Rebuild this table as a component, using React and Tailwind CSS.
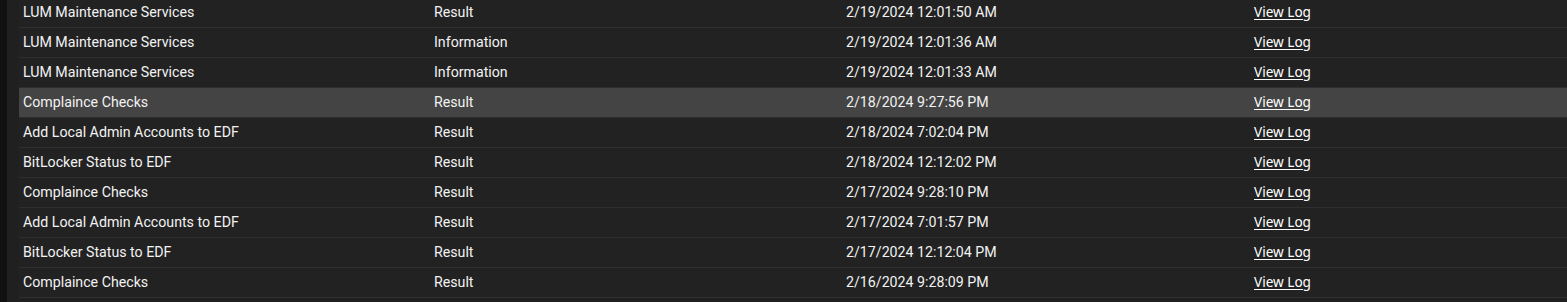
import React from "react";

const rows = [
  ["LUM Maintenance Services", "Result", "2/19/2024 12:01:50 AM"],
  ["LUM Maintenance Services", "Information", "2/19/2024 12:01:36 AM"],
  ["LUM Maintenance Services", "Information", "2/19/2024 12:01:33 AM"],
  ["Complaince Checks", "Result", "2/18/2024 9:27:56 PM", true],
  ["Add Local Admin Accounts to EDF", "Result", "2/18/2024 7:02:04 PM"],
  ["BitLocker Status to EDF", "Result", "2/18/2024 12:12:02 PM"],
  ["Complaince Checks", "Result", "2/17/2024 9:28:10 PM"],
  ["Add Local Admin Accounts to EDF", "Result", "2/17/2024 7:01:57 PM"],
  ["BitLocker Status to EDF", "Result", "2/17/2024 12:12:04 PM"],
  ["Complaince Checks", "Result", "2/16/2024 9:28:09 PM"],
];

export default function App() {
  return (
    <div className="flex w-[1567px] h-[302px] overflow-hidden bg-[#202020]">
      <div className="w-[7px] shrink-0 bg-[#111111]" />
      <div className="w-[12px] shrink-0 bg-[#202020]" />
      <div className="flex-1 overflow-hidden">
        <div className="-mt-[2px] w-[1650px]">
          {rows.map(([name, type, date, hl], i) => (
            <div
              key={i}
              className={`flex h-[30px] items-center border-b border-[#2e2e2e] text-[14.2px] text-[#f2f2f2] ${hl ? "bg-[#444444]" : "bg-[#222222]"}`}
              style={{ fontFamily: "Roboto, sans-serif" }}
            >
              <div className="w-[411px] shrink-0 pl-[4px]">{name}</div>
              <div className="w-[412px] shrink-0 pl-[4px]">{type}</div>
              <div className="w-[408px] shrink-0 pl-[4px]">{date}</div>
              <div className="w-[300px] shrink-0 pl-[4px]">
                <span
                  className="underline underline-offset-2 text-[13.6px] text-white"
                  style={{ fontFamily: "'Noto Sans', sans-serif" }}
                >
                  View Log
                </span>
              </div>
            </div>
          ))}
        </div>
      </div>
    </div>
  );
}
